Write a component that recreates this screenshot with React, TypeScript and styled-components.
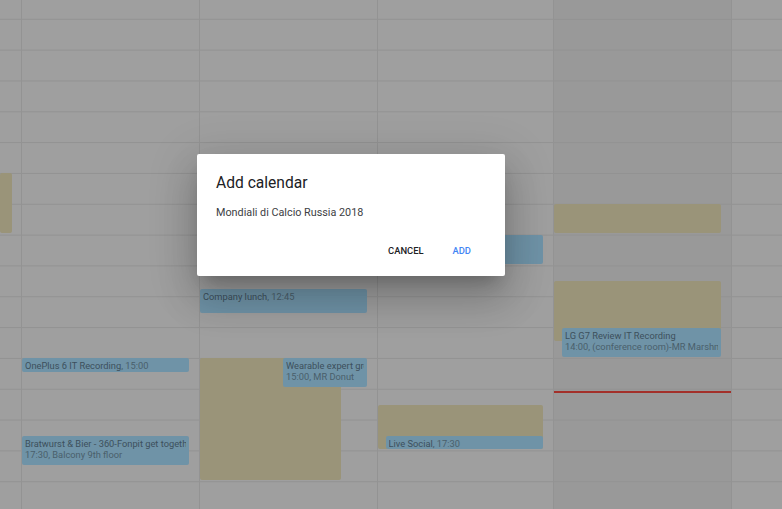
import React from "react";
import styled, { createGlobalStyle } from "styled-components";

const HOUR = 30.83;
const FIRST_LINE = 19.3; // y of the 4:00 line
const FIRST_HOUR = 4;
const yOf = (h: number) => FIRST_LINE + (h - FIRST_HOUR) * HOUR;

type Kind = "blue" | "tan";
type CalEvent = {
  start: number;
  end: number;
  kind: Kind;
  inset?: number;
  cut?: number;
  title?: string;
  time?: string;
  detail?: string;
};
type Day = { width: string; today?: boolean; first?: boolean; events: CalEvent[]; now?: number };

const days: Day[] = [
  { width: "21px", first: true, events: [{ start: 9, end: 11, kind: "tan", cut: 9.5 }] },
  {
    width: "178px",
    events: [
      { start: 15, end: 15.5, kind: "blue", title: "OnePlus 6 IT Recording", time: "15:00" },
      { start: 17.5, end: 18.5, kind: "blue", title: "Bratwurst & Bier - 360-Fonpit get together", detail: "17:30, Balcony 9th floor" },
    ],
  },
  {
    width: "178px",
    events: [
      { start: 12.75, end: 13.57, kind: "blue", title: "Company lunch", time: "12:45" },
      { start: 15, end: 19, kind: "tan", cut: 36 },
      { start: 15, end: 16, kind: "blue", inset: 83, title: "Wearable expert group", detail: "15:00, MR Donut" },
    ],
  },
  {
    width: "176px",
    events: [
      { start: 11, end: 12, kind: "blue" },
      { start: 16.5, end: 18, kind: "tan" },
      { start: 17.5, end: 18, kind: "blue", inset: 7.5, title: "Live Social", time: "17:30" },
    ],
  },
  {
    width: "178px",
    today: true,
    now: 16.08,
    events: [
      { start: 10, end: 11, kind: "tan" },
      { start: 12.5, end: 14.5, kind: "tan" },
      { start: 14, end: 15, kind: "blue", inset: 8, title: "LG G7 Review IT Recording", detail: "14:00, (conference room)-MR Marshmallow" },
    ],
  },
  { width: "1fr", events: [] },
];

const GlobalStyle = createGlobalStyle`
  html, body { margin: 0; padding: 0; }
  body {
    width: 782px;
    height: 509px;
    overflow: hidden;
    background: #9f9f9f;
    font-family: Roboto, "Noto Sans", Arial, sans-serif;
  }
`;

const Page = styled.div`
  position: relative;
  width: 782px;
  height: 509px;
  overflow: hidden;
`;

const WeekGrid = styled.div<{ $cols: string }>`
  display: grid;
  grid-template-columns: ${(p) => p.$cols};
  height: 100%;
`;

const DayColumn = styled.div<{ $today?: boolean; $first?: boolean }>`
  position: relative;
  overflow: hidden;
  border-left: ${(p) => (p.$first ? "none" : "1px solid #939393")};
  background-color: ${(p) => (p.$today ? "#999999" : "#9f9f9f")};
  background-image: linear-gradient(to bottom, #929292 0, #929292 1px, transparent 1px);
  background-size: 100% ${HOUR}px;
  background-position: 0 ${FIRST_LINE - 0.5}px;
`;

const EventBlock = styled.div<{ $kind: Kind; $inset: number; $cut: number }>`
  position: absolute;
  left: ${(p) => p.$inset}px;
  right: ${(p) => p.$cut}px;
  box-sizing: border-box;
  padding: 2px 3px 0 3px;
  border-radius: 2px;
  overflow: hidden;
  white-space: nowrap;
  background: ${(p) => (p.$kind === "blue" ? "#6f93a7" : "#9a9479")};
  color: #4a5f6b;
  font-size: 9.3px;
  line-height: 11px;
`;

const EventTitle = styled.span`
  font-weight: 400;
  color: #3d505c;
`;

const EventLine = styled.div`
  overflow: hidden;
`;

const NowLine = styled.div`
  position: absolute;
  left: 0;
  right: 0;
  height: 2px;
  background: #a3302a;
`;

const Dialog = styled.div`
  position: absolute;
  left: 197px;
  top: 154px;
  width: 308px;
  height: 122px;
  box-sizing: border-box;
  padding: 19px 24px 0 19px;
  background: #ffffff;
  border-radius: 2px;
  box-shadow: 0 11px 15px -7px rgba(0, 0, 0, 0.2), 0 24px 38px 3px rgba(0, 0, 0, 0.14),
    0 9px 46px 8px rgba(0, 0, 0, 0.12);
  display: flex;
  flex-direction: column;
`;

const DialogTitle = styled.h2`
  margin: 0;
  font-size: 15.6px;
  line-height: 20px;
  font-weight: 400;
  color: #202124;
`;

const DialogBody = styled.p`
  margin: 13px 0 0 0;
  font-size: 10.8px;
  line-height: 14px;
  color: #3c4043;
`;

const DialogActions = styled.div`
  display: flex;
  justify-content: flex-end;
  gap: 9px;
  margin-top: 19px;
`;

const TextButton = styled.button<{ $primary?: boolean }>`
  border: none;
  background: transparent;
  padding: 6px 10px;
  font-family: Roboto, "Noto Sans", Arial, sans-serif;
  font-size: 9.4px;
  line-height: 12px;
  font-weight: 500;
  text-transform: uppercase;
  color: ${(p) => (p.$primary ? "#4285f4" : "#202124")};
  cursor: pointer;
`;

function EventView({ ev }: { ev: CalEvent }) {
  const top = yOf(ev.start);
  const height = (ev.end - ev.start) * HOUR - 1.8;
  return (
    <EventBlock $kind={ev.kind} $inset={ev.inset ?? 0} $cut={ev.cut ?? 10} style={{ top, height }}>
      {ev.title && ev.time && (
        <EventLine>
          <EventTitle>{ev.title}</EventTitle>, {ev.time}
        </EventLine>
      )}
      {ev.title && ev.detail && (
        <>
          <EventLine>
            <EventTitle>{ev.title}</EventTitle>
          </EventLine>
          <EventLine>{ev.detail}</EventLine>
        </>
      )}
    </EventBlock>
  );
}

export default function App() {
  return (
    <>
      <GlobalStyle />
      <Page>
        <WeekGrid $cols={days.map((d) => d.width).join(" ")}>
          {days.map((d, i) => (
            <DayColumn key={i} $today={d.today} $first={d.first}>
              {d.events.map((ev, j) => (
                <EventView key={j} ev={ev} />
              ))}
              {d.now !== undefined && <NowLine style={{ top: yOf(d.now) - 1 }} />}
            </DayColumn>
          ))}
        </WeekGrid>
        <Dialog role="dialog" aria-labelledby="add-cal-title">
          <DialogTitle id="add-cal-title">Add calendar</DialogTitle>
          <DialogBody>Mondiali di Calcio Russia 2018</DialogBody>
          <DialogActions>
            <TextButton>Cancel</TextButton>
            <TextButton $primary>Add</TextButton>
          </DialogActions>
        </Dialog>
      </Page>
    </>
  );
}
